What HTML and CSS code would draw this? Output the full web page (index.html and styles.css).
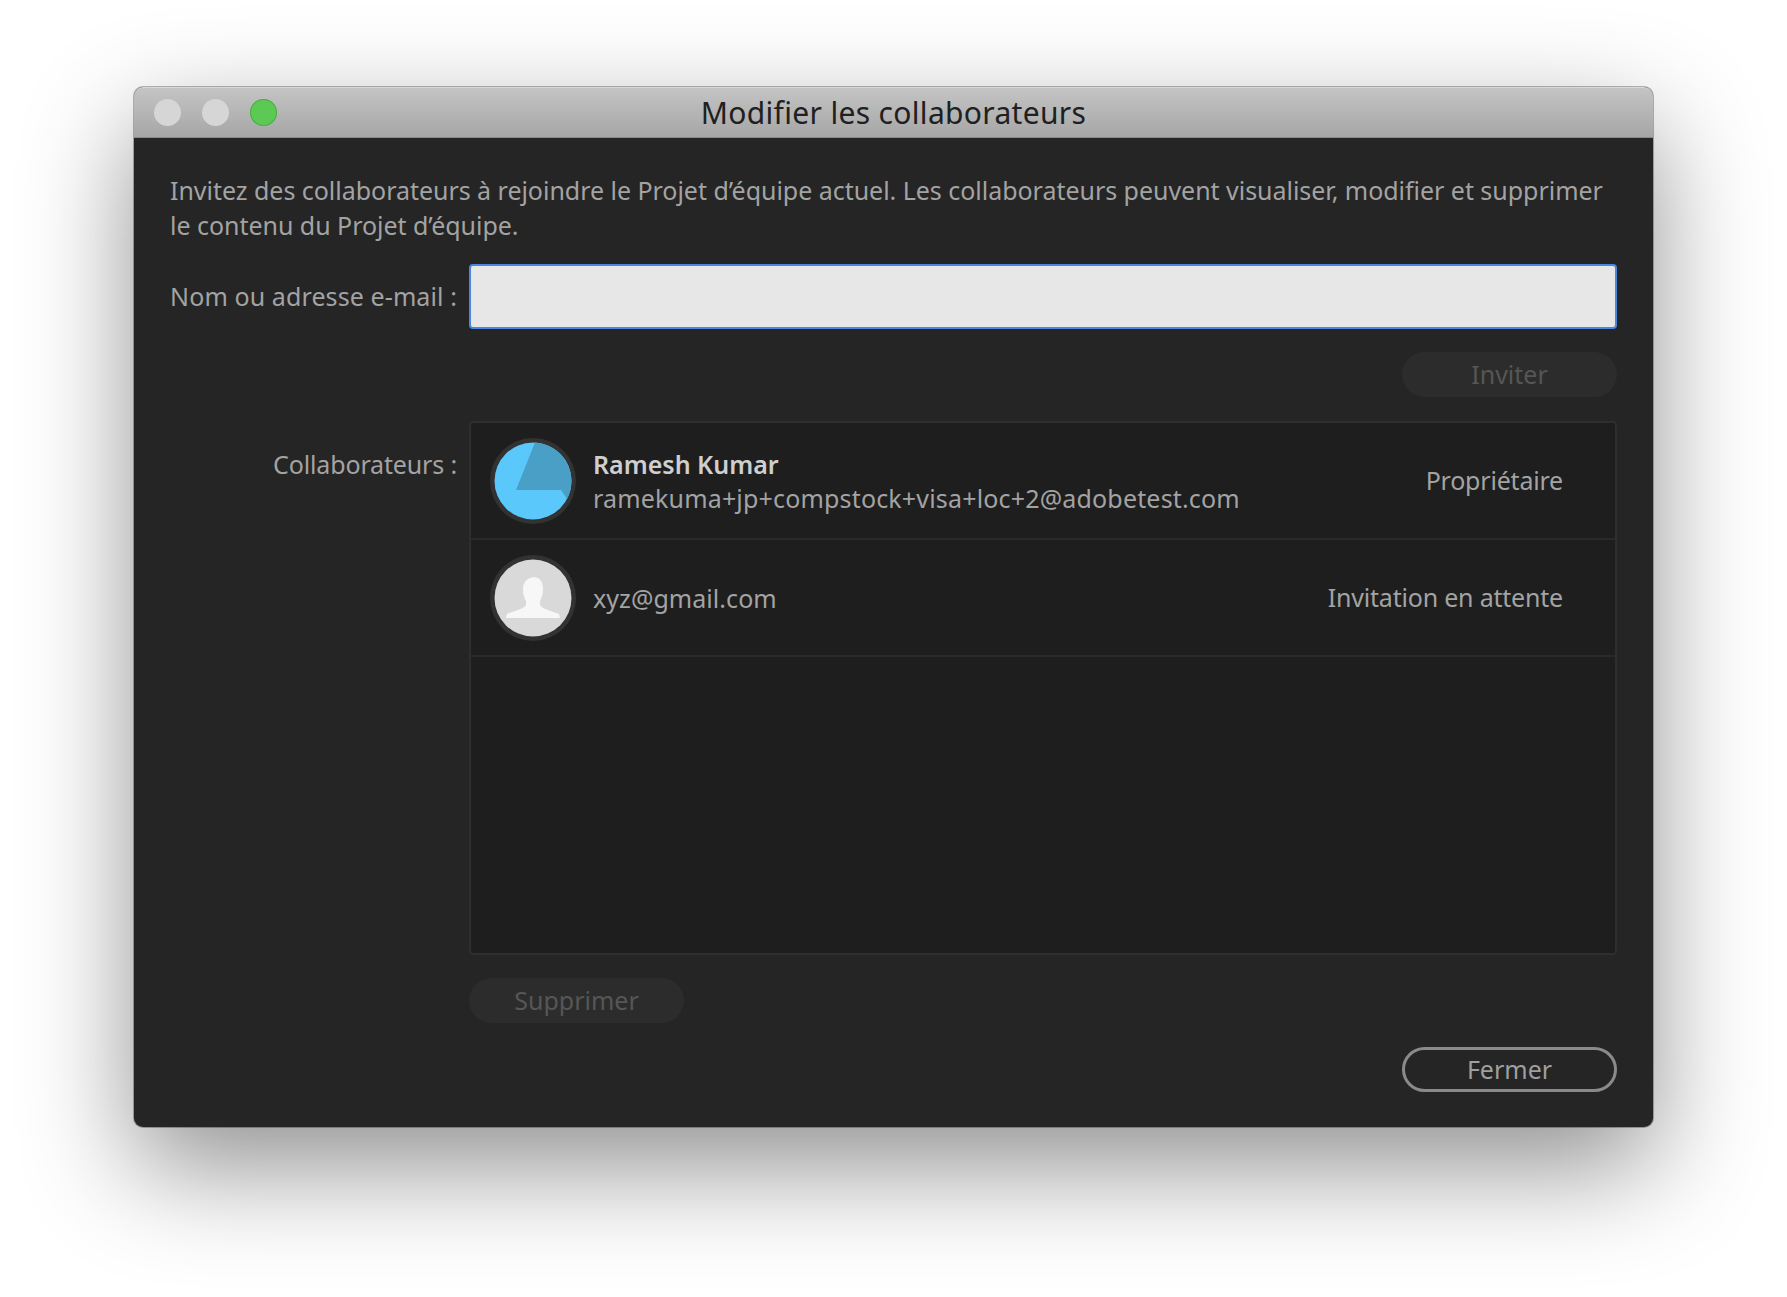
FILE: index.html
```html
<!DOCTYPE html>
<html lang="fr">
<head>
<meta charset="utf-8">
<title>Modifier les collaborateurs</title>
<link rel="stylesheet" href="styles.css">
</head>
<body>
<div class="window">
  <header class="titlebar">
    <div class="lights">
      <span class="light"></span>
      <span class="light"></span>
      <span class="light light-green"></span>
    </div>
    <div class="title">Modifier les collaborateurs</div>
  </header>
  <main class="content">
    <p class="intro">Invitez des collaborateurs à rejoindre le Projet d’équipe actuel. Les collaborateurs peuvent visualiser, modifier et supprimer<br>le contenu du Projet d’équipe.</p>
    <div class="form">
      <label class="label label-input">Nom ou adresse e-mail :</label>
      <div class="field"></div>
      <div class="actions-right"><span class="btn btn-disabled">Inviter</span></div>
      <div class="label label-list">Collaborateurs :</div>
      <div class="list">
        <div class="row">
          <svg class="avatar" viewBox="-43 -43 86 86">
            <circle r="43" fill="#323232"/>
            <circle r="38.5" fill="#5ac8fb"/>
            <path d="M2 -38.5L-17 9L28 9L34 18A38.5 38.5 0 0 0 2 -38.5Z" fill="#4a9fc6"/>
          </svg>
          <div class="who">
            <div class="name">Ramesh Kumar</div>
            <div class="email">ramekuma+jp+compstock+visa+loc+2@adobetest.com</div>
          </div>
          <div class="status">Propriétaire</div>
        </div>
        <div class="row">
          <svg class="avatar" viewBox="-43 -43 86 86">
            <circle r="43" fill="#323232"/>
            <circle r="38.5" fill="#d9d9d9"/>
            <path d="M1 -21C7 -21 10 -16 10 -9C10 -3 8 1 7 3L7 7C9 11 16 12 26 16L27 20L-27 20L-26 16C-16 12 -9 11 -7 7L-7 3C-8 1 -10 -3 -10 -9C-10 -16 -6 -20 1 -21Z" fill="#f7f7f7"/>
          </svg>
          <div class="who">
            <div class="email email-solo">xyz@gmail.com</div>
          </div>
          <div class="status">Invitation en attente</div>
        </div>
      </div>
      <div class="actions-left"><span class="btn btn-disabled">Supprimer</span></div>
      <div class="actions-right actions-close"><span class="btn btn-outline">Fermer</span></div>
    </div>
  </main>
</div>
</body>
</html>
```
FILE: styles.css
```css
html, body {
  margin: 0;
  height: 100%;
  background: #fff;
  overflow: hidden;
}
body {
  padding: 87px 134px 170px;
  box-sizing: border-box;
  font-family: "Noto Sans", "Open Sans", sans-serif;
}
.window {
  height: 1040px;
  display: flex;
  flex-direction: column;
  border-radius: 9px;
  background: #252525;
  box-shadow: 0 0 0 1px rgba(0,0,0,.28), 0 40px 110px rgba(0,0,0,.44);
}
.titlebar {
  height: 51px;
  flex: none;
  box-sizing: border-box;
  display: grid;
  grid-template-columns: 1fr auto 1fr;
  align-items: center;
  border-radius: 9px 9px 0 0;
  border-top: 1px solid #d8d8d8;
  border-bottom: 1px solid #8a8a8a;
  background: linear-gradient(#c4c4c4, #a6a6a6);
}
.lights {
  display: flex;
  gap: 21px;
  padding-left: 20px;
}
.light {
  width: 27px;
  height: 27px;
  border-radius: 50%;
  background: #d6d6d6;
}
.light-green {
  background: #5cc955;
  box-shadow: inset 0 0 0 1px #4aae45;
}
.title {
  font-size: 30px;
  letter-spacing: 0.33px;
  color: #202020;
}
.content {
  flex: 1;
  min-height: 0;
  padding: 35px 36px;
  display: flex;
  flex-direction: column;
  color: #a3a3a3;
  font-size: 25px;
}
.intro {
  margin: 0 0 21px;
  line-height: 35px;
  letter-spacing: -0.03px;
  color: #a3a3a3;
  white-space: nowrap;
}
.form {
  flex: 1;
  min-height: 0;
  display: grid;
  grid-template-columns: 287px 1fr;
  grid-template-rows: 65px 46px 1fr 45px 46px;
  column-gap: 12px;
  row-gap: 23px;
}
.label {
  text-align: right;
  white-space: nowrap;
  color: #a3a3a3;
}
.label-input {
  line-height: 65px;
  letter-spacing: 0.1px;
}
.label-list {
  line-height: 86px;
  letter-spacing: -0.15px;
}
.field {
  box-sizing: border-box;
  border: 2px solid #4a88e0;
  border-radius: 4px;
  background: #e7e7e7;
}
.actions-right {
  grid-column: 2;
  display: flex;
  justify-content: flex-end;
}
.actions-left {
  grid-column: 2;
  display: flex;
}
.actions-close {
  align-items: flex-end;
}
.btn {
  box-sizing: border-box;
  width: 215px;
  height: 45px;
  border-radius: 23px;
  text-align: center;
  line-height: 45px;
}
.btn-disabled {
  background: #2c2c2c;
  color: #565656;
}
.btn-outline {
  border: 3px solid #8a8a8a;
  line-height: 39px;
  color: #9f9f9f;
}
.list {
  grid-column: 2;
  box-sizing: border-box;
  border: 2px solid #2e2e2e;
  border-radius: 4px;
  background: #1e1e1e;
}
.row {
  box-sizing: border-box;
  height: 117px;
  display: flex;
  align-items: center;
  padding: 0 52px 0 19px;
  border-bottom: 2px solid #2a2a2a;
}
.avatar {
  width: 86px;
  height: 86px;
  flex: none;
  margin-right: 17px;
}
.who {
  flex: 1;
  min-width: 0;
}
.name {
  font-weight: 600;
  line-height: 34px;
  color: #cfcfcf;
}
.email {
  line-height: 34px;
  letter-spacing: 0.17px;
  color: #a3a3a3;
}
.email-solo {
  letter-spacing: 0.05px;
}
.status {
  margin-bottom: 1px;
  letter-spacing: -0.2px;
  color: #a3a3a3;
}
```
